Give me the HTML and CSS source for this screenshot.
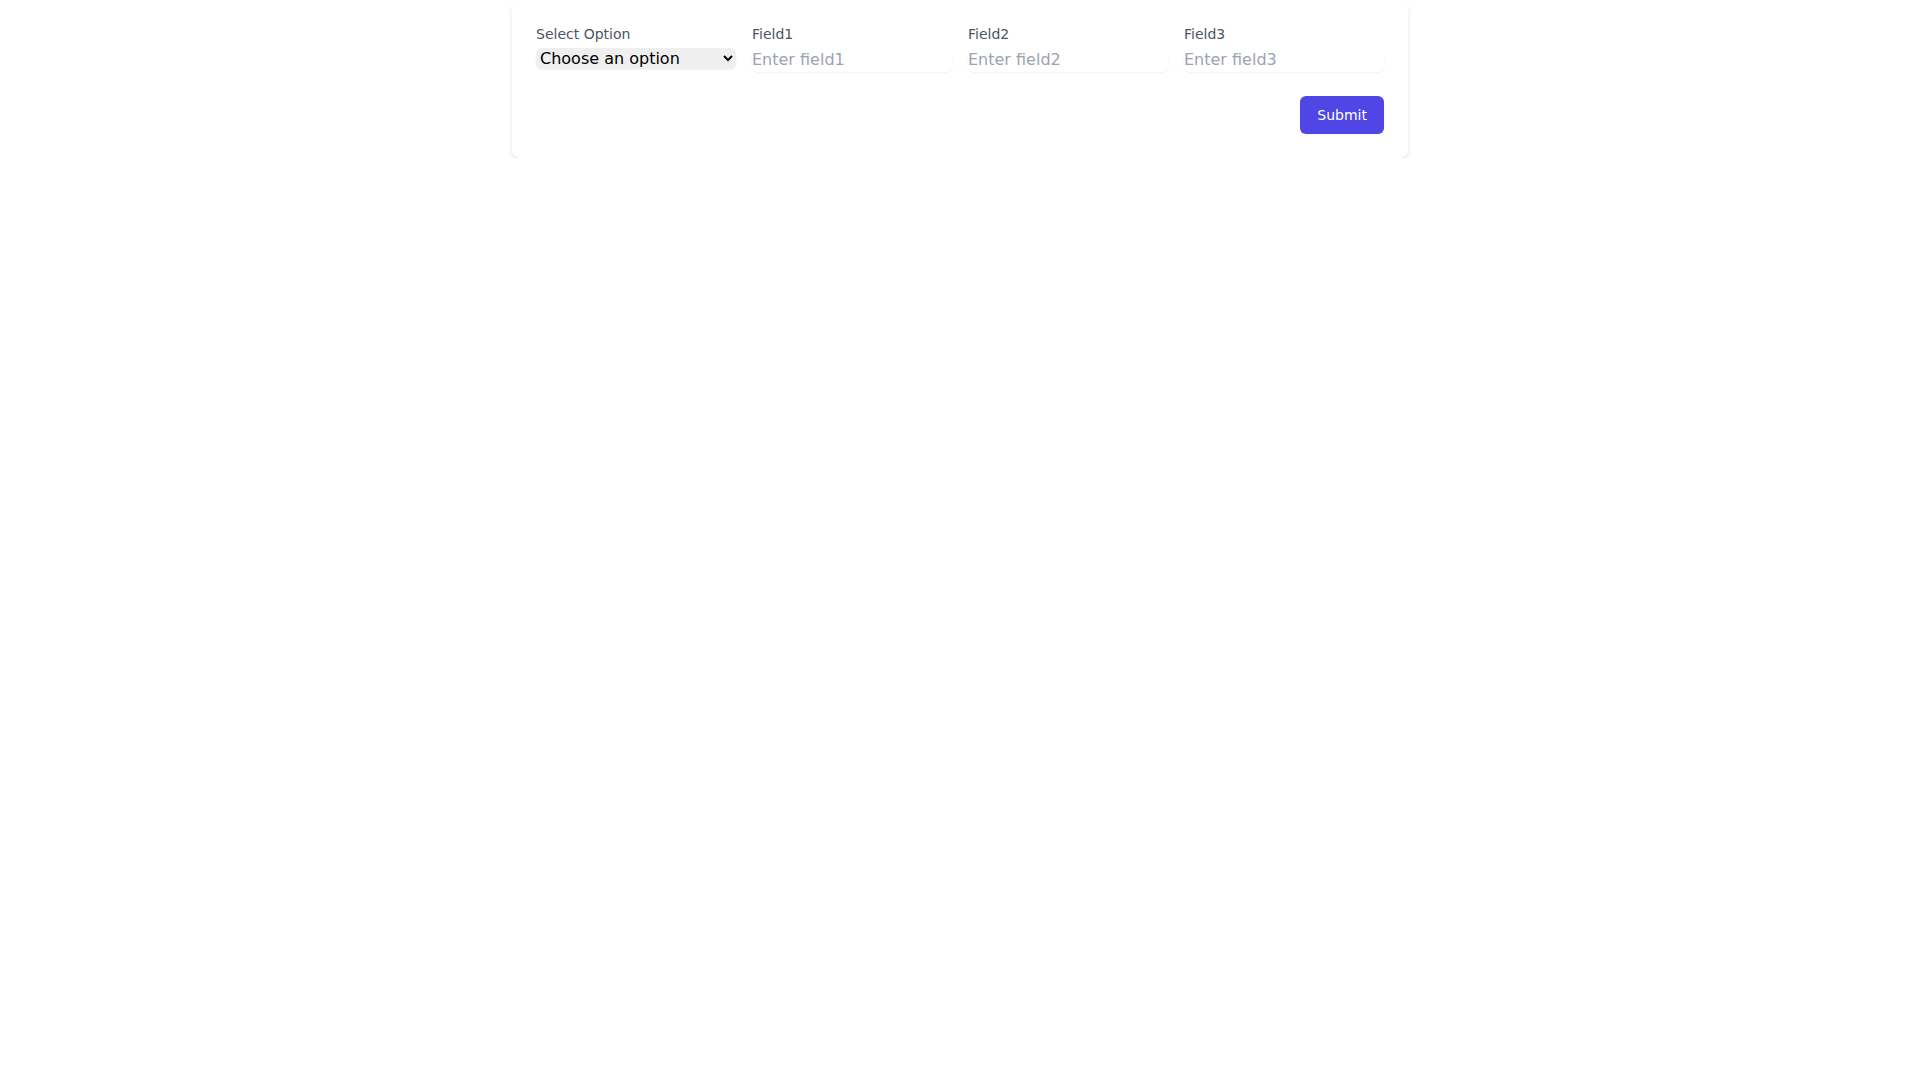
FILE: index.html
```html
<!DOCTYPE html>
<html lang="en">
<head>
<meta charset="utf-8">
<title>Form</title>
<link rel="stylesheet" href="styles.css">
</head>
<body>
<div class="card">
  <form class="form">
    <div class="grid">
      <div class="field">
        <label class="label" for="sel">Select Option</label>
        <select id="sel" class="control select">
          <option>Choose an option</option>
        </select>
      </div>
      <div class="field">
        <label class="label" for="f1">Field1</label>
        <input id="f1" class="control input" type="text" placeholder="Enter field1">
      </div>
      <div class="field">
        <label class="label" for="f2">Field2</label>
        <input id="f2" class="control input" type="text" placeholder="Enter field2">
      </div>
      <div class="field">
        <label class="label" for="f3">Field3</label>
        <input id="f3" class="control input" type="text" placeholder="Enter field3">
      </div>
    </div>
    <div class="actions">
      <button type="button" class="btn">Submit</button>
    </div>
  </form>
</div>
</body>
</html>
```

FILE: styles.css
```css
*, *::before, *::after { box-sizing: border-box; border-width: 0; border-style: solid; border-color: #e5e7eb; }
html, body { margin: 0; padding: 0; background: #fff; }
body { font-family: "DejaVu Sans", sans-serif; line-height: 1.5; color: #000; }
.card {
  max-width: 896px;
  margin: 0 auto;
  background: #fff;
  padding: 24px;
  border-radius: 8px;
  box-shadow: 0 4px 6px -1px rgba(0,0,0,0.1), 0 2px 4px -2px rgba(0,0,0,0.1);
}
.form { margin: 0; }
.grid { display: grid; grid-template-columns: repeat(4, minmax(0, 1fr)); gap: 16px; }
.field { display: block; }
.label { display: block; font-size: 14px; line-height: 20px; font-weight: 400; color: #4b5563; }
.control {
  display: block;
  width: 100%;
  margin: 4px 0 0 0;
  padding: 0;
  font-family: inherit;
  font-size: 16px;
  line-height: inherit;
  color: inherit;
  border-radius: 6px;
  border-color: #d1d5db;
  box-shadow: 0 1px 2px 0 rgba(0,0,0,0.05);
}
.input { background: transparent; outline: none; }
.input::placeholder { color: #9ca3af; opacity: 1; }
.actions { margin-top: 24px; display: flex; justify-content: flex-end; }
.btn {
  font-family: inherit;
  font-size: 14px;
  line-height: 20px;
  font-weight: 400;
  color: #fff;
  background: #4f46e5;
  padding: 8px 16px;
  border: 1px solid transparent;
  border-radius: 6px;
  box-shadow: 0 1px 2px 0 rgba(0,0,0,0.05);
  cursor: pointer;
}
```
